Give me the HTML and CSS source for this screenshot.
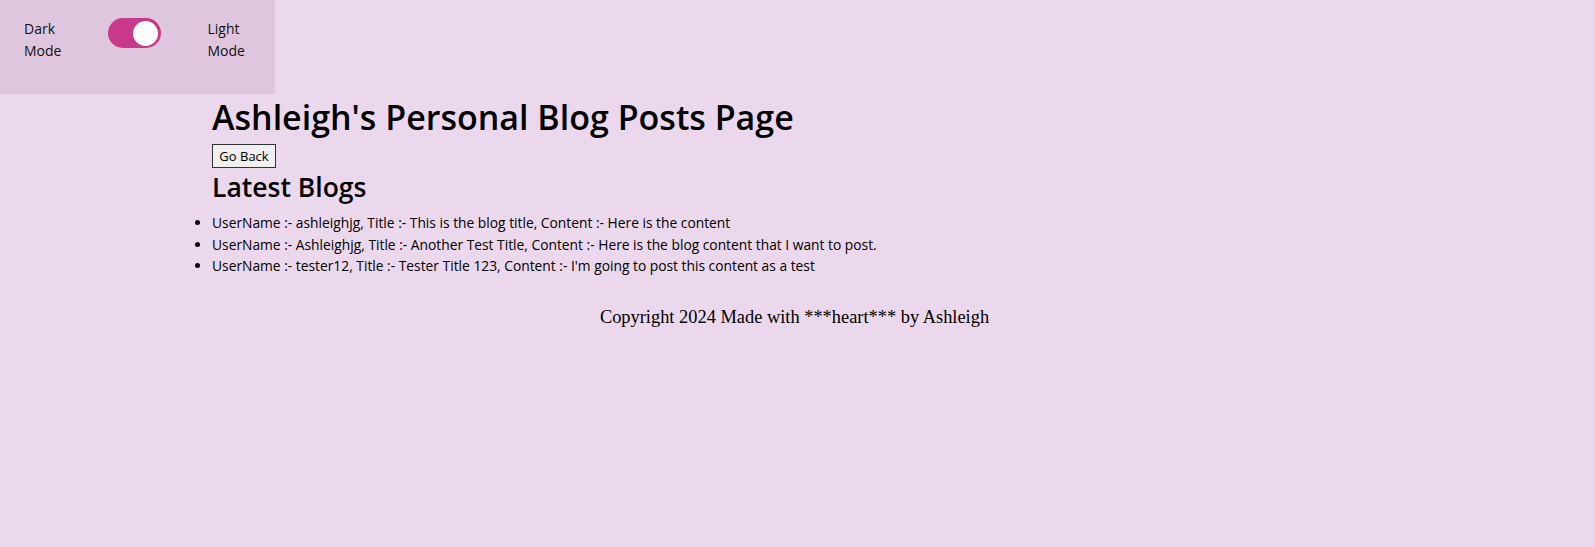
FILE: index.html
```html
<!DOCTYPE html>
<html lang="en">
<head>
<meta charset="utf-8">
<title>Ashleigh's Personal Blog Posts Page</title>
<link rel="stylesheet" href="styles.css">
</head>
<body>
<header class="mode-panel">
  <span class="mode-label">Dark<br>Mode</span>
  <span class="toggle"><span class="knob"></span></span>
  <span class="mode-label">Light<br>Mode</span>
</header>
<main class="content">
  <h1 class="title">Ashleigh's Personal Blog Posts Page</h1>
  <button class="back-btn">Go Back</button>
  <h2 class="subtitle">Latest Blogs</h2>
  <ul class="blog-list">
    <li>UserName :- ashleighjg, Title :- This is the blog title, Content :- Here is the content</li>
    <li>UserName :- Ashleighjg, Title :- Another Test Title, Content :- Here is the blog content that I want to post.</li>
    <li>UserName :- tester12, Title :- Tester Title 123, Content :- I'm going to post this content as a test</li>
  </ul>
</main>
<footer class="footer">Copyright 2024 Made with ***heart*** by Ashleigh</footer>
</body>
</html>
```
FILE: styles.css
```css
html, body {
  margin: 0;
  padding: 0;
}
body {
  background: #ecd8ec;
  font-family: "Open Sans", "Noto Sans", sans-serif;
  color: #000;
  min-height: 547px;
}
.mode-panel {
  width: 275px;
  height: 94px;
  box-sizing: border-box;
  background: #dec7de;
  display: flex;
  align-items: flex-start;
  padding: 18px 0 0 24px;
}
.mode-label {
  font-size: 14px;
  line-height: 22px;
  color: #111;
}
.toggle {
  width: 53px;
  height: 30px;
  border-radius: 15px;
  background: #c8398a;
  margin: 0 46px 0 47px;
  display: flex;
  align-items: center;
  justify-content: flex-end;
  padding-right: 3px;
  box-sizing: border-box;
}
.knob {
  width: 25px;
  height: 25px;
  border-radius: 50%;
  background: #fff;
}
.content {
  padding-left: 212px;
}
.title {
  font-size: 34px;
  line-height: 40px;
  font-weight: 600;
  margin: 3px 0 7px;
}
.back-btn {
  display: block;
  width: 64px;
  height: 24px;
  padding: 0;
  font-family: "Open Sans", sans-serif;
  font-size: 13px;
  background: #f0f0f0;
  border: 1px solid #333;
  border-radius: 0;
  color: #000;
}
.subtitle {
  font-size: 26.5px;
  line-height: 30px;
  font-weight: 600;
  margin: 4px 0 10px;
}
.blog-list {
  margin: 0;
  padding: 0;
  font-size: 13.8px;
  line-height: 21.5px;
}
.footer {
  text-align: center;
  font-family: "Liberation Serif", serif;
  font-size: 18.4px;
  line-height: 20px;
  margin-top: 30px;
  padding-right: 6px;
}
```
